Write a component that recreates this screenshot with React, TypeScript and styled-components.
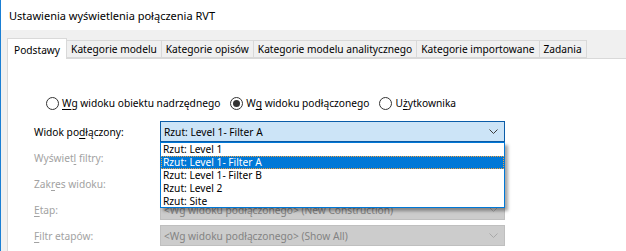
import React from "react";
import styled, { createGlobalStyle } from "styled-components";

const GlobalStyle = createGlobalStyle`
  html, body { margin: 0; padding: 0; background: #ffffff; }
  body { font-family: "Noto Sans", "Open Sans", sans-serif; font-size: 10.2px; }
  * { box-sizing: border-box; }
`;

const Window = styled.div`
  width: 626px;
  height: 251px;
  overflow: hidden;
  background: #f0f0f0;
  border-left: 1px solid #1a7fd4;
  display: flex;
  flex-direction: column;
  color: #000;
`;

const TitleBar = styled.div`
  height: 30px;
  flex: none;
  background: #ffffff;
  display: flex;
  align-items: center;
  padding-left: 8px;
  font-size: 11px;
`;

const Body = styled.div`
  flex: 1;
  display: flex;
  flex-direction: column;
  padding: 8px 0 0 6px;
`;

const TabStrip = styled.div`
  display: flex;
  align-items: flex-end;
  height: 20px;
  position: relative;
  z-index: 1;
`;

const Tab = styled.div<{ $active?: boolean }>`
  height: ${(p) => (p.$active ? "21px" : "18px")};
  padding: ${(p) => (p.$active ? "1px 6px 0" : "0 4px")};
  margin-left: ${(p) => (p.$active ? "0" : "-1px")};
  margin-bottom: ${(p) => (p.$active ? "-1px" : "0")};
  background: ${(p) => (p.$active ? "#ffffff" : "#f0f0f0")};
  border: 1px solid #d9d9d9;
  border-bottom: ${(p) => (p.$active ? "none" : "1px solid #d9d9d9")};
  display: flex;
  align-items: center;
  white-space: nowrap;
  position: relative;
  z-index: ${(p) => (p.$active ? 2 : 1)};
`;

const Panel = styled.div`
  flex: 1;
  background: #ffffff;
  border-top: 1px solid #d9d9d9;
  border-left: 1px solid #d9d9d9;
  padding: 37px 0 0 26px;
`;

const RadioRow = styled.div`
  display: flex;
  align-items: center;
  gap: 10px;
  height: 14px;
  padding-left: 12px;
  margin-bottom: 11px;
`;

const RadioOption = styled.label`
  display: flex;
  align-items: center;
  gap: 3px;
  white-space: nowrap;
`;

const RadioCircle = styled.span<{ $checked?: boolean }>`
  width: 13px;
  height: 13px;
  border-radius: 50%;
  border: 1px solid #333333;
  background: #ffffff;
  display: flex;
  align-items: center;
  justify-content: center;
  &::after {
    content: "";
    width: 7px;
    height: 7px;
    border-radius: 50%;
    background: ${(p) => (p.$checked ? "#333333" : "transparent")};
  }
`;

const Mn = styled.span`
  text-decoration: underline;
  text-underline-offset: 2px;
`;

const Form = styled.div`
  display: grid;
  grid-template-columns: 126px 345px;
  grid-auto-rows: 21px;
  row-gap: 5px;
  align-items: center;
`;

const Label = styled.div<{ $disabled?: boolean }>`
  color: ${(p) => (p.$disabled ? "#a2a2a2" : "#000000")};
  white-space: nowrap;
`;

const ComboWrap = styled.div`
  position: relative;
  height: 21px;
`;

const Combo = styled.div<{ $disabled?: boolean; $focused?: boolean }>`
  height: 21px;
  border: 1px solid
    ${(p) => (p.$focused ? "#0a5ca8" : p.$disabled ? "#bfbfbf" : "#adadad")};
  background: ${(p) => (p.$focused ? "#cce4f7" : p.$disabled ? "#cccccc" : "#e5e5e5")};
  color: ${(p) => (p.$disabled ? "#838383" : "#000000")};
  display: flex;
  align-items: center;
  justify-content: space-between;
  padding: 0 6px 0 3px;
  white-space: nowrap;
`;

const Chevron = styled.svg<{ $disabled?: boolean }>`
  width: 9px;
  height: 5px;
  flex: none;
  stroke: ${(p) => (p.$disabled ? "#a8a8a8" : "#3c3c3c")};
  fill: none;
`;

const DropList = styled.div`
  position: absolute;
  top: 21px;
  left: 0;
  width: 345px;
  height: 66px;
  background: #ffffff;
  border: 1px solid #0078d7;
  box-shadow: 3px 3px 3px rgba(0, 0, 0, 0.35);
  z-index: 5;
  display: flex;
  flex-direction: column;
`;

const DropItem = styled.div<{ $selected?: boolean }>`
  height: 13px;
  line-height: 13px;
  padding-left: 2px;
  white-space: nowrap;
  background: ${(p) => (p.$selected ? "#0078d7" : "transparent")};
  color: ${(p) => (p.$selected ? "#ffffff" : "#000000")};
  outline: ${(p) => (p.$selected ? "1px dotted #f0a040" : "none")};
  outline-offset: -1px;
`;

const ChevronIcon = ({ disabled }: { disabled?: boolean }) => (
  <Chevron $disabled={disabled} viewBox="0 0 9 5">
    <path d="M0.5 0.5 L4.5 4.5 L8.5 0.5" strokeWidth="1" />
  </Chevron>
);

const items = [
  "Rzut: Level 1",
  "Rzut: Level 1- Filter A",
  "Rzut: Level 1- Filter B",
  "Rzut: Level 2",
  "Rzut: Site",
];

export default function App() {
  return (
    <>
      <GlobalStyle />
      <Window>
        <TitleBar>Ustawienia wyświetlenia połączenia RVT</TitleBar>
        <Body>
          <TabStrip>
            <Tab $active>Podstawy</Tab>
            <Tab>Kategorie modelu</Tab>
            <Tab>Kategorie opisów</Tab>
            <Tab>Kategorie modelu analitycznego</Tab>
            <Tab>Kategorie importowane</Tab>
            <Tab>Zadania</Tab>
          </TabStrip>
          <Panel>
            <RadioRow>
              <RadioOption>
                <RadioCircle />
                <span>
                  <Mn>W</Mn>g widoku obiektu nadrzędnego
                </span>
              </RadioOption>
              <RadioOption>
                <RadioCircle $checked />
                <span>
                  W<Mn>g</Mn> widoku podłączonego
                </span>
              </RadioOption>
              <RadioOption>
                <RadioCircle />
                <span>
                  U<Mn>ż</Mn>ytkownika
                </span>
              </RadioOption>
            </RadioRow>
            <Form>
              <Label>
                Widok po<Mn>d</Mn>łączony:
              </Label>
              <ComboWrap>
                <Combo $focused>
                  <span>Rzut: Level 1- Filter A</span>
                  <ChevronIcon />
                </Combo>
                <DropList>
                  {items.map((it, i) => (
                    <DropItem key={it} $selected={i === 1}>
                      {it}
                    </DropItem>
                  ))}
                </DropList>
              </ComboWrap>

              <Label $disabled>
                Wyświet<Mn>l</Mn> filtry:
              </Label>
              <Combo $disabled>
                <span />
                <ChevronIcon disabled />
              </Combo>

              <Label $disabled>
                Zak<Mn>r</Mn>es widoku:
              </Label>
              <Combo $disabled>
                <span />
                <ChevronIcon disabled />
              </Combo>

              <Label $disabled>
                <Mn>E</Mn>tap:
              </Label>
              <Combo $disabled>
                <span>&lt;Wg widoku podłączonego&gt; (New Construction)</span>
                <ChevronIcon disabled />
              </Combo>

              <Label $disabled>
                <Mn>F</Mn>iltr etapów:
              </Label>
              <Combo $disabled>
                <span>&lt;Wg widoku podłączonego&gt; (Show All)</span>
                <ChevronIcon disabled />
              </Combo>
            </Form>
          </Panel>
        </Body>
      </Window>
    </>
  );
}
